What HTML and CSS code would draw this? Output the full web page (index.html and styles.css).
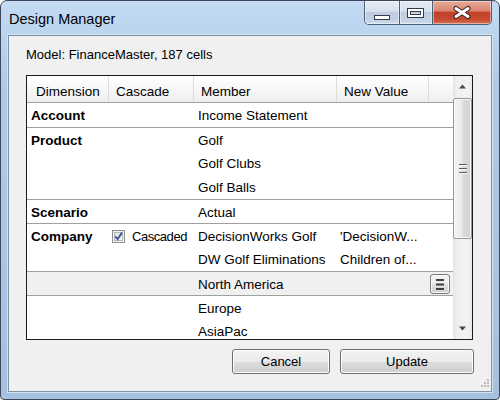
FILE: index.html
```html
<!DOCTYPE html>
<html>
<head>
<meta charset="utf-8">
<title>Design Manager</title>
<link rel="stylesheet" href="styles.css">
</head>
<body>
<div class="window">
  <div class="titlebar">
    <div class="title">Design Manager</div>
    <div class="caption">
      <div class="cbtn min">
        <svg width="34" height="23" viewBox="0 0 34 23"><rect x="9.5" y="14.5" width="15" height="4" fill="#fff" stroke="#333d4a"/></svg>
      </div>
      <div class="cbtn max">
        <svg width="32" height="23" viewBox="0 0 32 23"><rect x="7.5" y="7.5" width="16" height="9" fill="#fff" stroke="#333d4a"/><rect x="10.5" y="10.5" width="10" height="3" fill="#c6d3e3" stroke="#333d4a"/></svg>
      </div>
      <div class="cbtn close">
        <svg width="58" height="23" viewBox="0 0 58 23"><path d="M23 7.5 L35 15.5 M35 7.5 L23 15.5" stroke="#3a2424" stroke-width="5" stroke-linecap="round" fill="none"/><path d="M23 7.5 L35 15.5 M35 7.5 L23 15.5" stroke="#fff" stroke-width="3" stroke-linecap="round" fill="none"/></svg>
      </div>
    </div>
  </div>
  <div class="client">
    <div class="model">Model: FinanceMaster, 187 cells</div>
    <div class="grid">
      <div class="grid-main">
        <div class="row header">
          <div class="h dim">Dimension</div>
          <div class="h">Cascade</div>
          <div class="h">Member</div>
          <div class="h">New Value</div>
          <div class="h last"></div>
        </div>
        <div class="row">
          <div class="c dim b">Account</div><div class="c cas"></div><div class="c mem">Income Statement</div><div class="c val"></div><div class="c fill"></div>
        </div>
        <div class="row sep">
          <div class="c dim b">Product</div><div class="c cas"></div><div class="c mem">Golf</div><div class="c val"></div><div class="c fill"></div>
        </div>
        <div class="row">
          <div class="c dim"></div><div class="c cas"></div><div class="c mem">Golf Clubs</div><div class="c val"></div><div class="c fill"></div>
        </div>
        <div class="row">
          <div class="c dim"></div><div class="c cas"></div><div class="c mem">Golf Balls</div><div class="c val"></div><div class="c fill"></div>
        </div>
        <div class="row sep">
          <div class="c dim b">Scenario</div><div class="c cas"></div><div class="c mem">Actual</div><div class="c val"></div><div class="c fill"></div>
        </div>
        <div class="row sep">
          <div class="c dim b">Company</div>
          <div class="c cas">
            <svg class="check" width="13" height="13" viewBox="0 0 13 13">
              <defs><linearGradient id="cb" x1="0" y1="0" x2="1" y2="1"><stop offset="0" stop-color="#dcdcdc"/><stop offset="1" stop-color="#fbfbfb"/></linearGradient></defs>
              <rect x="0.5" y="0.5" width="12" height="12" fill="#f4f4f4" stroke="#8e8f8f"/>
              <rect x="2.5" y="2.5" width="8" height="8" fill="url(#cb)" stroke="#b4b8bd"/>
              <path d="M3.3 6.4 L5.6 9.2 L10 2.6" stroke="#41569a" stroke-width="1.9" fill="none"/>
            </svg>
            <span class="cas-label">Cascaded</span>
          </div>
          <div class="c mem">DecisionWorks Golf</div><div class="c val">'DecisionW...</div><div class="c fill"></div>
        </div>
        <div class="row">
          <div class="c dim"></div><div class="c cas"></div><div class="c mem">DW Golf Eliminations</div><div class="c val">Children of...</div><div class="c fill"></div>
        </div>
        <div class="row sep sel">
          <div class="c dim"></div><div class="c cas"></div><div class="c mem">North America</div><div class="c val"></div>
          <div class="c fill">
            <div class="ellip">
              <svg width="18" height="18" viewBox="0 0 18 18"><rect x="5" y="4" width="8" height="2" fill="#3f3f3f"/><rect x="5" y="8.5" width="8" height="2" fill="#3f3f3f"/><rect x="5" y="13" width="8" height="2" fill="#3f3f3f"/></svg>
            </div>
          </div>
        </div>
        <div class="row sep">
          <div class="c dim"></div><div class="c cas"></div><div class="c mem">Europe</div><div class="c val"></div><div class="c fill"></div>
        </div>
        <div class="row">
          <div class="c dim"></div><div class="c cas"></div><div class="c mem">AsiaPac</div><div class="c val"></div><div class="c fill"></div>
        </div>
      </div>
      <div class="scrollbar">
        <div class="arrow">
          <svg width="19" height="22" viewBox="0 0 19 22"><path d="M6 12.5 L13 12.5 L9.5 8.5 Z" fill="#4a4a4a"/></svg>
        </div>
        <div class="track">
          <div class="thumb">
            <svg width="9" height="10" viewBox="0 0 9 10"><rect x="0" y="0" width="8" height="1" fill="#5c5c5c"/><rect x="0" y="1" width="8" height="1" fill="#fbfbfb"/><rect x="0" y="4" width="8" height="1" fill="#5c5c5c"/><rect x="0" y="5" width="8" height="1" fill="#fbfbfb"/><rect x="0" y="8" width="8" height="1" fill="#5c5c5c"/><rect x="0" y="9" width="8" height="1" fill="#fbfbfb"/></svg>
          </div>
        </div>
        <div class="arrow">
          <svg width="19" height="22" viewBox="0 0 19 22"><path d="M6 9.5 L13 9.5 L9.5 13.5 Z" fill="#4a4a4a"/></svg>
        </div>
      </div>
    </div>
    <div class="buttons">
      <button class="btn cancel">Cancel</button>
      <button class="btn update">Update</button>
    </div>
    <svg class="grip" width="12" height="12" viewBox="0 0 12 12">
      <rect x="9" y="1" width="2" height="2" fill="#b9b9b9"/>
      <rect x="6" y="4" width="2" height="2" fill="#b9b9b9"/><rect x="9" y="4" width="2" height="2" fill="#b9b9b9"/>
      <rect x="3" y="7" width="2" height="2" fill="#b9b9b9"/><rect x="6" y="7" width="2" height="2" fill="#b9b9b9"/><rect x="9" y="7" width="2" height="2" fill="#b9b9b9"/>
    </svg>
  </div>
</div>
</body>
</html>
```

FILE: styles.css
```css
* { box-sizing: border-box; }
html, body { margin: 0; padding: 0; }
body {
  width: 500px;
  height: 400px;
  overflow: hidden;
  background: #ffffff;
  font-family: "Liberation Sans", Arial, sans-serif;
  font-size: 13px;
  color: #000;
}

.window {
  width: 500px;
  height: 400px;
  border: 1px solid #3c4859;
  border-radius: 7px 7px 4px 4px;
  background: linear-gradient(180deg, #c4dbf3 0px, #bcd5ef 30px, #b0cae8 80px, #a6c0df 100%);
  padding: 0 7px 7px 7px;
  display: flex;
  flex-direction: column;
}

.titlebar {
  height: 34px;
  display: flex;
  justify-content: space-between;
  align-items: flex-start;
}
.title {
  font-family: "Liberation Sans", Arial, sans-serif;
  font-size: 14.5px;
  line-height: 20px;
  padding: 8px 0 0 1px;
  color: #000;
}

.caption {
  display: flex;
  height: 24px;
  border: 1px solid #4f5f74;
  border-top: 0;
  border-radius: 0 0 5px 5px;
  overflow: hidden;
}
.cbtn {
  height: 23px;
  display: flex;
  border-left: 1px solid #4f5f74;
  box-shadow: inset 0 0 0 1px rgba(255,255,255,0.45);
}
.cbtn.min { width: 34px; border-left: 0; }
.cbtn.max { width: 33px; }
.cbtn.min, .cbtn.max {
  background: linear-gradient(180deg, #e4ecf6 0%, #d6e1ee 45%, #bdcce0 50%, #c3d2e5 85%, #cfdcec 100%);
}
.cbtn.close {
  width: 59px;
  background: linear-gradient(180deg, #e8ab9b 0%, #d98672 42%, #c4412a 50%, #c74a31 80%, #d77258 100%);
}

.client {
  flex: 1;
  position: relative;
  border: 1px solid #7f91a6;
  box-shadow: 0 0 0 1px #d4e2f2;
  background: #f0f0f0;
  padding: 11px 17px 0 17px;
  display: flex;
  flex-direction: column;
}

.model {
  height: 16px;
  line-height: 16px;
  white-space: nowrap;
}

.grid {
  margin-top: 12px;
  margin-right: 1px;
  height: 265px;
  border: 1px solid #1b1b1b;
  background: #fff;
  display: flex;
  font-size: 13.5px;
}
.grid-main {
  flex: 1;
  overflow: hidden;
}
.row {
  display: grid;
  grid-template-columns: 82px 85px 143px 92px 1fr;
  height: 24px;
}
.row.sep { border-top: 1px solid #a0a0a0; }
.row.sel { background: #f0f0f0; }

.row.header {
  height: 27px;
  border-bottom: 1px solid #a0a0a0;
  background: linear-gradient(180deg, #ffffff 0%, #f7f7f7 50%, #efefef 100%);
}
.h {
  display: flex;
  align-items: center;
  padding: 4px 0 0 7px;
  border-right: 1px solid #dedede;
  white-space: nowrap;
}
.h.dim { padding-left: 9px; }
.h.last { border-right: 0; }

.c {
  display: flex;
  align-items: center;
  white-space: nowrap;
  overflow: hidden;
  padding-top: 1px;
}
.c.dim { padding-left: 4px; }
.c.cas { padding-left: 3px; }
.c.mem { padding-left: 4px; }
.c.val { padding-left: 3px; }
.c.fill { justify-content: flex-end; padding-right: 3px; padding-top: 0; }
.b { font-weight: bold; }

.check { flex: none; }
.cas-label { margin-left: 7px; font-size: 13px; letter-spacing: -0.45px; }

.ellip {
  width: 20px;
  height: 20px;
  border: 1px solid #7a7a7a;
  border-radius: 3px;
  background: linear-gradient(180deg, #f4f4f4 0%, #ececec 50%, #dedede 50%, #d1d1d1 100%);
  box-shadow: inset 0 0 0 1px #fbfbfb;
  display: flex;
}

.scrollbar {
  width: 19px;
  display: flex;
  flex-direction: column;
  background: linear-gradient(90deg, #e4e4e4 0%, #efefef 20%, #f2f2f2 80%, #e8e8e8 100%);
}
.arrow {
  height: 22px;
  display: flex;
}
.track {
  flex: 1;
}
.thumb {
  height: 141px;
  border: 1px solid #979797;
  border-radius: 2px;
  background: linear-gradient(90deg, #f4f4f4 0%, #e9e9e9 45%, #dadada 55%, #d2d2d2 100%);
  box-shadow: inset 0 0 0 1px #f9f9f9;
  display: flex;
  align-items: center;
  justify-content: center;
}
.thumb svg { margin-left: 1px; }

.buttons {
  margin-top: 9px;
  display: flex;
  justify-content: flex-end;
  gap: 10px;
}
.btn {
  height: 25px;
  margin: 0;
  padding: 0;
  border: 1px solid #707070;
  border-radius: 3px;
  background: linear-gradient(180deg, #f2f2f2 0%, #ebebeb 50%, #dddddd 50%, #cfcfcf 100%);
  box-shadow: inset 0 0 0 1px #fcfcfc;
  font-family: "Liberation Sans", Arial, sans-serif;
  font-size: 13px;
  color: #000;
}
.btn.cancel { width: 98px; }
.btn.update { width: 134px; }

.grip {
  position: absolute;
  right: 1px;
  bottom: 1px;
}
```
